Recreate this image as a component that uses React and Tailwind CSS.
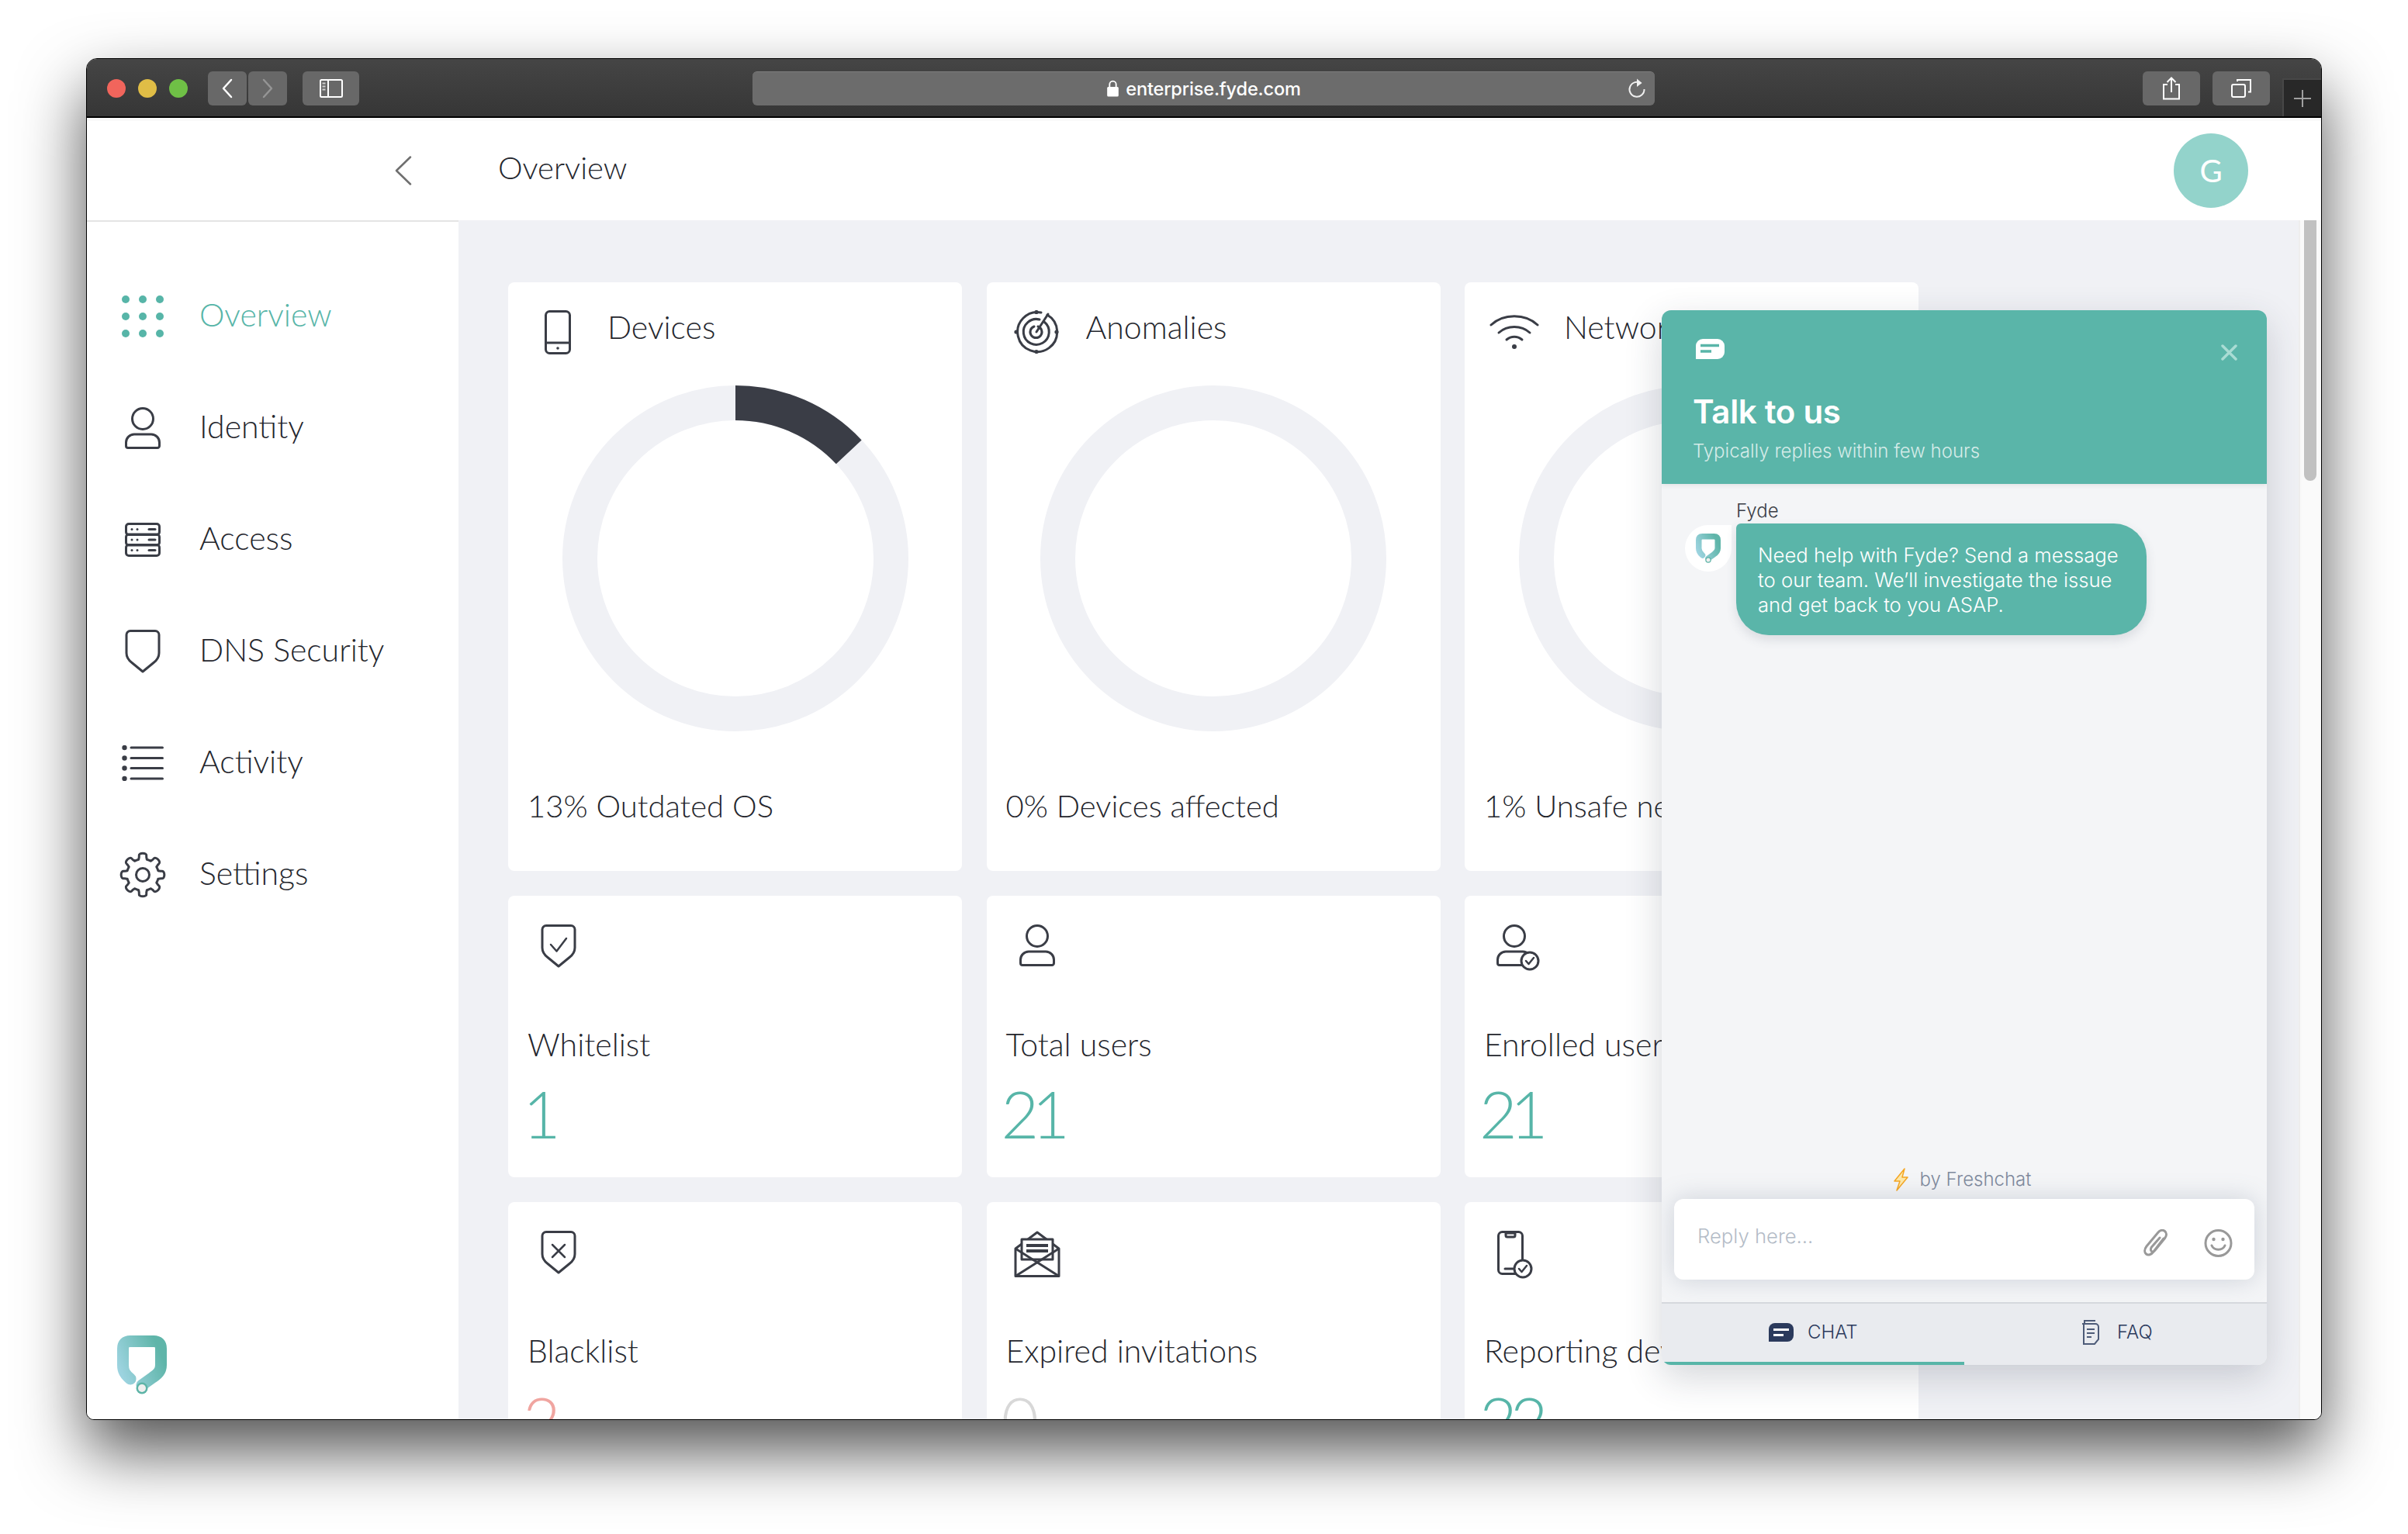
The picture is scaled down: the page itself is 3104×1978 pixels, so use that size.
import { Fragment } from 'react'

const teal = '#57b5a8'
const ink = '#3a3d46'

// 8 tooth gear, worked out once instead of hand writing the path
const gearPath = (() => {
  const pt = (r, deg) => {
    const a = (deg * Math.PI) / 180
    return `${(30 + r * Math.cos(a)).toFixed(2)} ${(30 + r * Math.sin(a)).toFixed(2)}`
  }
  let d = ''
  for (let i = 0; i < 8; i++) {
    const c = i * 45 - 90
    d += `${i === 0 ? 'M' : 'L'}${pt(20.5, c - 15)} C${pt(22.5, c - 13)} ${pt(23, c - 11)} ${pt(25, c - 11)} `
    d += `C${pt(29.5, c - 11)} ${pt(29.5, c + 11)} ${pt(25, c + 11)} C${pt(23, c + 11)} ${pt(22.5, c + 13)} ${pt(20.5, c + 15)} `
    d += `A20.5 20.5 0 0 1 ${pt(20.5, c + 30)} `
  }
  return d + 'Z'
})()

const Shield = ({ w = 46, h = 56, children }) => (
  <svg width={w} height={h} viewBox="0 0 46 56" fill="none" stroke={ink} strokeWidth="3" strokeLinecap="round" strokeLinejoin="round">
    <path d="M7 1.500h32a5 5 0 0 1 5 5V30c0 6-3 9.500-7 12.500L23 54 9 42.500C5 39.500 2 36 2 30V6.500a5 5 0 0 1 5-5z" />
    {children}
  </svg>
)

const DotsIcon = () => (
  <svg width="54" height="54" viewBox="0 0 54 54" fill={teal}>
    {[5, 27, 49].map(y => [5, 27, 49].map(x => <circle key={`${x}-${y}`} cx={x} cy={y} r="5" />))}
  </svg>
)

const UserIcon = () => (
  <svg width="46" height="54" viewBox="0 0 46 54" fill="none" stroke={ink} strokeWidth="3">
    <circle cx="23" cy="15" r="13.500" />
    <path d="M12 35h22a10.500 10.500 0 0 1 10.500 10.500V50a2.500 2.500 0 0 1-2.500 2.500H4A2.500 2.500 0 0 1 1.500 50v-4.500A10.500 10.500 0 0 1 12 35z" />
  </svg>
)

const ServerIcon = () => (
  <svg width="46" height="44" viewBox="0 0 46 44" fill="none" stroke={ink} strokeWidth="3">
    <rect x="1.500" y="1.500" width="43" height="14" rx="3.500" />
    <rect x="1.500" y="15" width="43" height="14" rx="3.500" />
    <rect x="1.500" y="28.500" width="43" height="14" rx="3.500" />
    {[8.500, 22, 35.500].map(y => (
      <Fragment key={y}>
        <circle cx="9" cy={y} r="1.500" fill={ink} stroke="none" />
        <circle cx="16" cy={y} r="1.500" fill={ink} stroke="none" />
        <line x1="31" x2="39" y1={y} y2={y} strokeLinecap="round" />
      </Fragment>
    ))}
  </svg>
)

const ListIcon = () => (
  <svg width="54" height="46" viewBox="0 0 54 46" fill="none" stroke={ink} strokeWidth="3" strokeLinecap="round">
    {[3, 16.500, 29.500, 43].map(y => (
      <Fragment key={y}>
        <circle cx="3.500" cy={y} r="3.200" fill={ink} stroke="none" />
        <line x1="12" x2="52.500" y1={y} y2={y} />
      </Fragment>
    ))}
  </svg>
)

const GearIcon = () => (
  <svg width="60" height="60" viewBox="0 0 60 60" fill="none" stroke={ink} strokeWidth="3" strokeLinejoin="round">
    <path d={gearPath} />
    <circle cx="30" cy="30" r="8.500" />
  </svg>
)

const PhoneIcon = () => (
  <svg width="34" height="57" viewBox="0 0 34 57" fill="none" stroke={ink} strokeWidth="3">
    <rect x="1.500" y="1.500" width="31" height="54" rx="5" />
    <line x1="1.500" x2="32.500" y1="42" y2="42" />
    <circle cx="17" cy="49" r="1.800" fill={ink} stroke="none" />
  </svg>
)

const RadarIcon = () => (
  <svg width="58" height="56" viewBox="0 0 58 56" fill="none" stroke={ink} strokeWidth="3" strokeLinecap="round">
    <path d="M43 6a25.500 25.500 0 1 1-8-3" />
    <path d="M39 15a16.500 16.500 0 1 1-6-3" />
    <path d="M31 21a7.500 7.500 0 1 1-5 0" />
    <line x1="29" y1="28" x2="44" y2="5" />
    <circle cx="3" cy="28" r="2.600" fill={ink} stroke="none" />
    <circle cx="55" cy="28" r="2.600" fill={ink} stroke="none" />
    <circle cx="29" cy="2.500" r="2.600" fill={ink} stroke="none" />
    <circle cx="29" cy="53.500" r="2.600" fill={ink} stroke="none" />
  </svg>
)

const WifiIcon = () => (
  <svg width="64" height="46" viewBox="0 0 64 46" fill="none" stroke={ink} strokeWidth="3" strokeLinecap="round">
    <path d="M2 14c16-15 44-15 60 0" />
    <path d="M12 24c11-10 29-10 40 0" />
    <path d="M22 33c6-5 14-5 20 0" />
    <circle cx="32" cy="42" r="3" fill={ink} stroke="none" />
  </svg>
)

const CheckBadge = ({ cx, cy }) => (
  <>
    <circle cx={cx} cy={cy} r="11" fill="#fff" />
    <path d={`M${cx - 5} ${cy}l3.500 4 6.500-8`} fill="none" strokeWidth="2.500" />
  </>
)

const EnrolledIcon = () => (
  <svg className="ml-[8px] shrink-0" width="56" height="60" viewBox="0 0 56 60" fill="none" stroke={ink} strokeWidth="3" strokeLinecap="round" strokeLinejoin="round">
    <circle cx="23" cy="15" r="13.500" />
    <path d="M12 35h22a10.500 10.500 0 0 1 10.500 10.500V50a2.500 2.500 0 0 1-2.500 2.500H4A2.500 2.500 0 0 1 1.500 50v-4.500A10.500 10.500 0 0 1 12 35z" />
    <CheckBadge cx={43} cy={47} />
  </svg>
)

const EnvelopeIcon = () => (
  <svg width="60" height="60" viewBox="0 0 60 60" fill="none" stroke={ink} strokeWidth="3" strokeLinejoin="round">
    <path d="M2 23 30 2l28 21v35.500H2z" />
    <rect x="10" y="11" width="40" height="26" fill="#fff" />
    <path d="M2 23l56 35.500M58 23 2 58.500" fill="none" />
    <path d="M16 19h28M16 26h28" strokeWidth="4" />
  </svg>
)

const PhoneCheckIcon = () => (
  <svg width="46" height="62" viewBox="0 0 46 62" fill="none" stroke={ink} strokeWidth="3" strokeLinecap="round" strokeLinejoin="round">
    <rect x="1.500" y="1.500" width="31" height="54" rx="5" />
    <path d="M11 3h12v3a2 2 0 0 1-2 2h-8a2 2 0 0 1-2-2zM10 49h10" />
    <CheckBadge cx={33} cy={49} />
  </svg>
)

const FydeLogo = ({ className, id }) => (
  <svg className={className} viewBox="0 0 64 76" fill="none">
    <defs>
      <linearGradient id={id} gradientUnits="userSpaceOnUse" x1="6" y1="50" x2="58" y2="28">
        <stop offset="0" stopColor="#9cd3df" />
        <stop offset="1" stopColor="#5fb5a9" />
      </linearGradient>
    </defs>
    <path
      d="M17 56C10 50 7.500 46 7.500 38V17Q7.500 7.500 17 7.500H47Q56.500 7.500 56.500 17V38C56.500 46 52 50 46 54L32 64"
      stroke={`url(#${id})`}
      strokeWidth="15"
      strokeLinecap="round"
      strokeLinejoin="round"
    />
    <circle cx="32" cy="68" r="7.500" fill="#5db4a7" />
    <circle cx="32" cy="68" r="5" fill="#efefef" />
  </svg>
)

const navItems = [
  { label: 'Overview', icon: <DotsIcon />, active: true },
  { label: 'Identity', icon: <UserIcon /> },
  { label: 'Access', icon: <ServerIcon /> },
  { label: 'DNS Security', icon: <Shield /> },
  { label: 'Activity', icon: <ListIcon /> },
  { label: 'Settings', icon: <GearIcon /> },
]

const donuts = [
  { title: 'Devices', icon: <PhoneIcon />, label: '13% Outdated OS', pct: 13 },
  { title: 'Anomalies', icon: <RadarIcon />, label: '0% Devices affected', pct: 0 },
  { title: 'Networks', icon: <WifiIcon />, label: '1% Unsafe networks', pct: 1 },
]

const stats = [
  {
    title: 'Whitelist',
    value: '1',
    color: 'text-[#57b5a8]',
    icon: (
      <Shield>
        <path d="M13 26l7.500 8.500L33 18" strokeWidth="2.500" />
      </Shield>
    ),
  },
  { title: 'Total users', value: '21', color: 'text-[#57b5a8]', icon: <UserIcon /> },
  { title: 'Enrolled users', value: '21', color: 'text-[#57b5a8]', icon: <EnrolledIcon /> },
  {
    title: 'Blacklist',
    value: '2',
    color: 'text-[#f0a5a0]',
    icon: (
      <Shield>
        <path d="M15 18l16 16M31 18 15 34" strokeWidth="2.500" />
      </Shield>
    ),
  },
  { title: 'Expired invitations', value: '0', color: 'text-[#d8d8d8]', icon: <EnvelopeIcon /> },
  { title: 'Reporting devices', value: '22', color: 'text-[#57b5a8]', icon: <PhoneCheckIcon /> },
]

function Donut({ pct }) {
  const r = 200.5
  const circ = 2 * Math.PI * r
  return (
    <svg width="446" height="446" viewBox="0 0 446 446" fill="none" className="mx-auto mt-[41px]">
      <circle cx="223" cy="223" r={r} stroke="#f0f1f5" strokeWidth="45" />
      <circle
        cx="223"
        cy="223"
        r={r}
        stroke={ink}
        strokeWidth="45"
        strokeDasharray={`${(circ * pct) / 100} ${circ}`}
        transform="rotate(-90 223 223)"
      />
    </svg>
  )
}

function ChromeButton({ className, children }) {
  return (
    <div className={`flex h-[44px] items-center justify-center rounded-[6px] bg-[#686868] ${className}`}>{children}</div>
  )
}

function TitleBar() {
  return (
    <div className="flex h-[76px] shrink-0 items-start border-b-2 border-black bg-gradient-to-b from-[#454545] to-[#363636] pt-[16px] pl-[26px]">
      <div className="flex h-[44px] items-center gap-[16px]">
        <span className="h-[24px] w-[24px] rounded-full bg-[#f1655c]" />
        <span className="h-[24px] w-[24px] rounded-full bg-[#e0bd46]" />
        <span className="h-[24px] w-[24px] rounded-full bg-[#6fc046]" />
      </div>
      <ChromeButton className="ml-[26px] w-[50px]">
        <svg width="16" height="26" viewBox="0 0 16 26" fill="none" stroke="#fff" strokeWidth="2.500" strokeLinecap="round" strokeLinejoin="round">
          <path d="M13 2 3 13l10 11" />
        </svg>
      </ChromeButton>
      <ChromeButton className="ml-[2px] w-[50px]">
        <svg width="16" height="26" viewBox="0 0 16 26" fill="none" stroke="#959595" strokeWidth="2.500" strokeLinecap="round" strokeLinejoin="round">
          <path d="m3 2 10 11L3 24" />
        </svg>
      </ChromeButton>
      <ChromeButton className="ml-[20px] w-[73px]">
        <svg width="30" height="24" viewBox="0 0 30 24" fill="none" stroke="#fff" strokeWidth="2">
          <rect x="1" y="1" width="28" height="22" rx="1.500" />
          <line x1="11" x2="11" y1="1" y2="23" />
          <path d="M3.500 5.500h4M3.500 9.500h4M3.500 13.500h4" stroke="#cfcfcf" strokeWidth="2" />
        </svg>
      </ChromeButton>
      <div className="relative ml-[507px] flex h-[44px] w-[1163px] items-center justify-center gap-[8px] rounded-[6px] border-t border-[#7d7d7d] bg-[#6c6c6c] font-['Inter',sans-serif] text-[23.600px] font-medium text-white">
        <svg width="17" height="22" viewBox="0 0 15 21" className="mb-[2px]">
          <path d="M3.500 9V5.500a4 4 0 0 1 8 0V9" fill="none" stroke="#fff" strokeWidth="1.800" />
          <rect x="0.500" y="8.500" width="14" height="12" rx="1.500" fill="#fff" />
        </svg>
        <span className="tracking-[-0.2px]">enterprise.fyde.com</span>
        <svg className="absolute right-[11px] top-[6px]" width="24" height="28" viewBox="0 0 24 28" fill="none" stroke="#f0f0f0" strokeWidth="2">
          <path d="M17.500 8.500A9.500 9.500 0 1 0 21.500 16" />
          <path d="M12 2.500 18.500 8 12 13z" fill="#f0f0f0" stroke="none" />
        </svg>
      </div>
      <ChromeButton className="ml-[629px] w-[74px]">
        <svg width="24" height="30" viewBox="0 0 24 30" fill="none" stroke="#fff" strokeWidth="2">
          <path d="M7 10H2v18.500h20V10h-5" />
          <path d="M12 20V2M6.500 7 12 1.500 17.500 7" />
        </svg>
      </ChromeButton>
      <ChromeButton className="ml-[16px] w-[74px]">
        <svg width="26" height="24" viewBox="0 0 26 24" fill="none" stroke="#fff" strokeWidth="2">
          <rect x="1" y="7" width="17" height="16" rx="2" />
          <path d="M8 3V1h17v15.500h-3" />
        </svg>
      </ChromeButton>
      <div className="ml-[16px] mt-[9px] flex h-[49px] w-[50px] items-center justify-center border-t-2 border-l-2 border-[#474747] bg-[#282828]">
        <svg width="24" height="24" viewBox="0 0 24 24" stroke="#a0a0a0" strokeWidth="2">
          <path d="M12 1v22M1 12h22" />
        </svg>
      </div>
    </div>
  )
}

function Sidebar() {
  return (
    <aside className="flex w-[479px] shrink-0 flex-col border-t-2 border-[#e4e4e4] bg-white pt-[50px] pl-[32px]">
      {navItems.map(item => (
        <div key={item.label} className="flex h-[144px] items-center gap-[33px]">
          <span className="flex w-[80px] justify-center">{item.icon}</span>
          <span className={`pb-[4px] text-[41px] ${item.active ? 'text-[#57b5a8]' : ''}`}>{item.label}</span>
        </div>
      ))}
      <FydeLogo id="logo-side" className="mt-auto mb-[32px] ml-[7px] h-[76px] w-[64px]" />
    </aside>
  )
}

function DonutCard({ title, icon, label, pct }) {
  return (
    <div className="h-[759px] rounded-[8px] bg-white pt-[36px]">
      <div className="flex h-[56px] items-center gap-[24px] pl-[24px]">
        <span className="flex w-[80px] justify-center">{icon}</span>
        <span className="pb-[12px] text-[41px] leading-[48px]">{title}</span>
      </div>
      <Donut pct={pct} />
      <p className="mt-[72px] pl-[25px] text-[40px] leading-[48px]">{label}</p>
    </div>
  )
}

function StatCard({ title, value, color, icon }) {
  return (
    <div className="h-[363px] rounded-[8px] bg-white px-[25px] pt-[37px]">
      <div className="flex h-[60px] w-[80px] items-start justify-center">{icon}</div>
      <p className="mt-[71px] whitespace-nowrap text-[41px] leading-[48px]">{title}</p>
      <p className={`mt-[20px] ml-[-6px] text-[84px] leading-[90px] font-light tracking-[-9px] ${color}`}>{value}</p>
    </div>
  )
}

function ChatPanel() {
  return (
    <div className="absolute top-[324px] left-[2030px] flex h-[1360px] w-[780px] flex-col overflow-hidden rounded-[12px] bg-[#f4f5f7] font-['Inter',sans-serif] shadow-[0_16px_48px_rgba(40,50,70,0.2)]">
      <div className="relative h-[224px] shrink-0 bg-[#5ab5a9] pt-[37px] pl-[40px] shadow-[0_2px_6px_rgba(0,0,0,0.08)]">
        <svg className="ml-[4px]" width="37" height="26" viewBox="0 0 37 26">
          <path d="M9 0h19a9 9 0 0 1 9 9v8a9 9 0 0 1-9 9H0V9a9 9 0 0 1 9-9z" fill="#fff" />
          <path d="M6 8.500h24M6 16h14" stroke="#5ab5a9" strokeWidth="3.500" />
        </svg>
        <svg className="absolute top-[44px] right-[38px]" width="21" height="21" viewBox="0 0 21 21" stroke="#a9dcd4" strokeWidth="3.500" strokeLinecap="round">
          <path d="M2 2l17 17M19 2 2 19" />
        </svg>
        <p className="mt-[42px] text-[42px] leading-[52px] font-semibold tracking-[-0.3px] text-white">Talk to us</p>
        <p className="mt-[10px] text-[24px] leading-[30px] text-white/75">Typically replies within few hours</p>
      </div>

      <div className="flex-1 pt-[20px]">
        <p className="pl-[96px] text-[24px] leading-[30px] text-[#3a3d46]">Fyde</p>
        <div className="mt-[1px] flex items-start gap-[6px] pl-[30px]">
          <span className="mt-[2px] flex h-[60px] w-[60px] items-center justify-center rounded-full rounded-tr-[14px] bg-white">
            <FydeLogo id="logo-chat" className="h-[38px] w-[32px]" />
          </span>
          <div className="h-[144px] w-[529px] rounded-[42px] rounded-tl-[6px] bg-[#5ab5a9] pt-[25px] pl-[28px] text-[25.700px] leading-[32px] whitespace-nowrap text-white shadow-[0_6px_14px_rgba(60,70,90,0.14)]">
            Need help with Fyde? Send a message
            <br />
            to our team. We’ll investigate the issue
            <br />
            and get back to you ASAP.
          </div>
        </div>
      </div>

      <div className="flex h-[30px] shrink-0 items-center justify-center gap-[14px] pr-[6px] text-[24px] text-[#7f8a9d]">
        <svg width="21" height="30" viewBox="0 0 21 30">
          <path d="M15 1 2 17h7L5 29l14-17h-7z" fill="#ffe9a8" stroke="#f5a623" strokeWidth="1.500" strokeLinejoin="round" />
        </svg>
        <span>by Freshchat</span>
      </div>
      <div className="mx-[16px] mt-[10px] flex h-[104px] shrink-0 items-center justify-between rounded-[12px] bg-white pr-[28px] pl-[30px] text-[25.700px] text-[#b4bcc7] shadow-[0_0_32px_rgba(100,115,140,0.28)]">
        <span className="mb-[8px]">Reply here...</span>
        <div className="mt-[10px] flex items-center gap-[45px]">
          <svg width="33" height="36" viewBox="0 0 33 36" fill="none" stroke="#999" strokeWidth="3" strokeLinecap="round">
            <path d="M26 12 13 29c-3 4-7 5-9.500 3S1 26 4 22L19 4c2.500-3 6-3.500 8.500-1.500S30 8 28 11L15 27c-1.500 2-3 2.500-4.500 1.500S9 25 10.500 23L21 11" />
          </svg>
          <svg width="37" height="36" viewBox="0 0 37 36" fill="none" stroke="#999" strokeWidth="3" strokeLinecap="round">
            <circle cx="18.500" cy="18" r="16.500" />
            <path d="M10 21c3 7 14 7 17 0" />
            <circle cx="12.500" cy="13" r="2.200" fill="#999" stroke="none" />
            <circle cx="24.500" cy="13" r="2.200" fill="#999" stroke="none" />
          </svg>
        </div>
      </div>

      <div className="mt-[29px] flex h-[81px] shrink-0 border-t-2 border-[#d5d8dd] bg-[#e9ebef] text-[24px] text-[#2b3a5c]">
        <div className="relative flex w-[390px] items-center gap-[18px] pb-[6px] pl-[138px]">
          <svg width="32" height="24" viewBox="0 0 32 24">
            <path d="M8 0h16a8 8 0 0 1 8 8v8a8 8 0 0 1-8 8H0V8a8 8 0 0 1 8-8z" fill="#2b3a5c" />
            <path d="M6 8.500h20M6 15.500h13" stroke="#fff" strokeWidth="3" />
          </svg>
          <span>CHAT</span>
          <span className="absolute right-0 bottom-0 left-[3px] h-[4px] bg-[#57b5a8]" />
        </div>
        <div className="flex items-center gap-[23px] pb-[6px] pl-[151px]">
          <svg width="23" height="32" viewBox="0 0 23 32" fill="none" stroke="#4d5b78" strokeWidth="2">
            <path d="M4 5V1h14M1 5h17a4 4 0 0 1 4 4v16l-5 6H3V5z" />
            <path d="M7 12h10M7 17h10M7 22h6" />
          </svg>
          <span>FAQ</span>
        </div>
      </div>
    </div>
  )
}

export default function App() {
  return (
    <div className="h-[1978px] overflow-hidden bg-white pt-[75px] pl-[111px] font-['Lato',sans-serif] font-light text-[#24262d]">
      <div className="relative flex h-[1756px] w-[2882px] flex-col overflow-hidden rounded-[14px] rounded-b-[10px] border border-black bg-white shadow-[0_40px_84px_rgba(0,0,0,0.68)]">
        <TitleBar />
        <header className="flex h-[132px] shrink-0 items-center border-t-[4px] border-[#fafafa] bg-white">
          <svg className="ml-[397px]" width="22" height="38" viewBox="0 0 22 38" fill="none" stroke="#6f6f6f" strokeWidth="2.500" strokeLinecap="round" strokeLinejoin="round">
            <path d="M20 1.500 2 19l18 17.500" />
          </svg>
          <h1 className="mb-[8px] ml-[111px] text-[40px] font-light">Overview</h1>
          <div className="mr-[94px] ml-auto flex h-[96px] w-[96px] items-center justify-center rounded-full bg-[#93d3cb] text-[40px] font-normal text-white">
            G
          </div>
        </header>
        <div className="flex min-h-0 flex-1">
          <Sidebar />
          <main className="min-w-0 flex-1 overflow-hidden bg-[#f0f1f5] pt-[80px] pl-[64px]">
            <div className="grid grid-cols-[585px_585px_585px] gap-x-[31.500px] gap-y-[32px]">
              {donuts.map(d => <DonutCard key={d.title} {...d} />)}
              {stats.map(s => <StatCard key={s.title} {...s} />)}
            </div>
          </main>
          <div className="w-[29px] shrink-0 border-l-2 border-[#eeeeee] bg-[#fafafa] pl-[5px]">
            <div className="h-[336px] w-[16px] rounded-b-full bg-[#c1c1c1]" />
          </div>
        </div>
        <ChatPanel />
      </div>
    </div>
  )
}
